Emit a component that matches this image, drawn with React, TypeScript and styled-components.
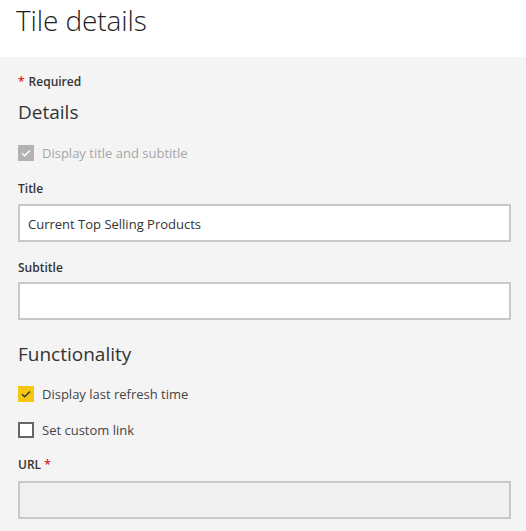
import React from "react";
import styled, { createGlobalStyle } from "styled-components";

const Global = createGlobalStyle`
  html, body { margin: 0; padding: 0; background: #f4f4f4; }
  body { font-family: "Open Sans", "Noto Sans", sans-serif; color: #333; }
  * { box-sizing: border-box; }
`;

const Header = styled.header`
  height: 57px;
  background: #ffffff;
  padding: 0 0 0 16px;
`;

const PageTitle = styled.h1`
  margin: 0;
  font-size: 28px;
  font-weight: 300;
  line-height: 41px;
  color: #1f1f1f;
  letter-spacing: -0.1px;
`;

const Panel = styled.main`
  padding: 17px 15px 12px 18px;
  display: flex;
  flex-direction: column;
`;

const Required = styled.div`
  font-size: 12px;
  font-weight: 600;
  line-height: 16px;
  color: #333;
`;

const Star = styled.span`
  color: #e81123;
  margin-right: 4px;
`;

const SectionTitle = styled.h2<{ $gap: number }>`
  margin: ${(p) => p.$gap}px 0 0;
  font-size: 19px;
  font-weight: 400;
  line-height: 26px;
  color: #333;
`;

const CheckRow = styled.label<{ $gap: number; $disabled?: boolean }>`
  margin-top: ${(p) => p.$gap}px;
  display: flex;
  align-items: center;
  gap: 8px;
  height: 20px;
  font-size: 13px;
  color: ${(p) => (p.$disabled ? "#a6a6a6" : "#444")};
`;

const Box = styled.span<{ $variant: "disabled" | "checked" | "empty" }>`
  width: 16px;
  height: 16px;
  display: flex;
  align-items: center;
  justify-content: center;
  flex-shrink: 0;
  background: ${(p) =>
    p.$variant === "disabled" ? "#b3b3b3" : p.$variant === "checked" ? "#f2c811" : "#ffffff"};
  border: ${(p) => (p.$variant === "empty" ? "2px solid #666666" : "none")};
`;

const FieldLabel = styled.div<{ $gap: number }>`
  margin-top: ${(p) => p.$gap}px;
  font-size: 12px;
  font-weight: 600;
  line-height: 16px;
  color: #333;
`;

const Input = styled.input<{ $gap: number }>`
  margin-top: ${(p) => p.$gap}px;
  width: 100%;
  height: 38px;
  border: 2px solid #c8c8c8;
  background: ${(p) => (p.disabled ? "#f0f0f0" : "#ffffff")};
  padding: 1px 8px 0;
  font-family: inherit;
  font-size: 13px;
  color: #333;
  outline: none;
`;

const Check = ({ color }: { color: string }) => (
  <svg width="12" height="12" viewBox="0 0 12 12">
    <path d="M2 6.3 L4.6 8.8 L10 3.4" fill="none" stroke={color} strokeWidth="1.4" />
  </svg>
);

export default function App() {
  return (
    <>
      <Global />
      <Header>
        <PageTitle>Tile details</PageTitle>
      </Header>
      <Panel>
        <Required>
          <Star>*</Star>Required
        </Required>
        <SectionTitle $gap={9}>Details</SectionTitle>
        <CheckRow $gap={18} $disabled>
          <Box $variant="disabled">
            <Check color="#ffffff" />
          </Box>
          Display title and subtitle
        </CheckRow>
        <FieldLabel $gap={18}>Title</FieldLabel>
        <Input $gap={7} defaultValue="Current Top Selling Products" />
        <FieldLabel $gap={18}>Subtitle</FieldLabel>
        <Input $gap={6} defaultValue="" />
        <SectionTitle $gap={21}>Functionality</SectionTitle>
        <CheckRow $gap={17}>
          <Box $variant="checked">
            <Check color="#333333" />
          </Box>
          Display last refresh time
        </CheckRow>
        <CheckRow $gap={16}>
          <Box $variant="empty" />
          Set custom link
        </CheckRow>
        <FieldLabel $gap={17}>
          URL <Star>*</Star>
        </FieldLabel>
        <Input $gap={8} disabled defaultValue="" />
      </Panel>
    </>
  );
}
